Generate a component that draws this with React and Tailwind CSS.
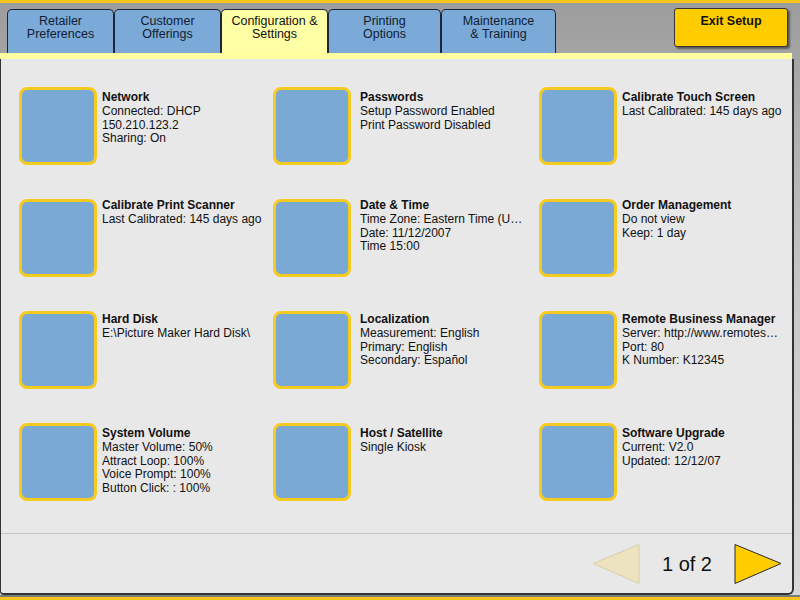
const tabs = [
  { label: ["Retailer", "Preferences"], w: "w-[107px]" },
  { label: ["Customer", "Offerings"], w: "w-[107px]" },
  { label: ["Configuration &", "Settings"], w: "w-[107px]", active: true },
  { label: ["Printing", "Options"], w: "w-[113px]" },
  { label: ["Maintenance", "& Training"], w: "w-[115px]" },
];

const settings = [
  { title: "Network", lines: ["Connected: DHCP", "150.210.123.2", "Sharing: On"] },
  { title: "Passwords", lines: ["Setup Password Enabled", "Print Password Disabled"] },
  { title: "Calibrate Touch Screen", lines: ["Last Calibrated: 145 days ago"] },
  { title: "Calibrate Print Scanner", lines: ["Last Calibrated: 145 days ago"] },
  {
    title: "Date & Time",
    lines: ["Time Zone: Eastern Time (US & Canada)", "Date: 11/12/2007", "Time 15:00"],
  },
  { title: "Order Management", lines: ["Do not view", "Keep: 1 day"] },
  { title: "Hard Disk", lines: ["E:\\Picture Maker Hard Disk\\"] },
  {
    title: "Localization",
    lines: ["Measurement: English", "Primary: English", "Secondary: Español"],
  },
  {
    title: "Remote Business Manager",
    lines: ["Server: http://www.remotesupport.com", "Port: 80", "K Number: K12345"],
  },
  {
    title: "System Volume",
    lines: ["Master Volume: 50%", "Attract Loop: 100%", "Voice Prompt: 100%", "Button Click: : 100%"],
  },
  { title: "Host / Satellite", lines: ["Single Kiosk"] },
  { title: "Software Upgrade", lines: ["Current: V2.0", "Updated: 12/12/07"] },
];

// text offset per row, the rows don't sit at the same spot next to the icon
const rowText = ["pt-[4px]", "pt-0", "pt-[2px]", "pt-[4px]"];

const SettingTile = ({ item, col, row }) => (
  <div className={`flex ${col === 1 ? "gap-[9px]" : "gap-[5px]"}`}>
    {/* Icon placeholder */}
    <div className="w-[78px] h-[78px] shrink-0 rounded-[8px] border-[3px] border-[#f5cb1f] bg-[#7ba9d6]" />
    <div
      className={`${col === 2 ? "w-[160px]" : "w-[164px]"} ${rowText[row]} text-[12px] leading-[13.75px] text-[#111]`}
    >
      <div className="font-bold truncate">{item.title}</div>
      {item.lines.map((line, i) => (
        <div key={i} className="truncate whitespace-pre">
          {line}
        </div>
      ))}
    </div>
  </div>
);

export default function App() {
  return (
    <div
      className="w-[800px] h-[600px] overflow-hidden flex flex-col bg-gradient-to-b from-[#9c9c9c] via-[#c8c8c8] to-[#d8d8d8]"
      style={{ fontFamily: '"Liberation Sans", Arial, sans-serif' }}
    >
      {/* Top yellow bar */}
      <div className="h-[3px] bg-[#f3c41a]" />

      {/* Header: tabs + exit */}
      <div className="h-[50px] flex items-start pl-[7px] pr-[12px]">
        <div className="flex items-end h-full">
          {tabs.map((tab, i) => (
            <div
              key={i}
              className={`${tab.w} h-[44px] rounded-t-[5px] border border-b-0 border-[#1c2638] flex flex-col items-center pt-[5px] text-[12.5px] leading-[13px] ${
                tab.active ? "bg-[#ffffa6] text-[#111]" : "bg-[#7ba9d8] text-[#121c30]"
              }`}
            >
              <span>{tab.label[0]}</span>
              <span>{tab.label[1]}</span>
            </div>
          ))}
        </div>
        <button className="ml-auto mt-[5px] w-[114px] h-[39px] rounded-[3px] border border-[#333] bg-[#ffcc00] shadow-[2px_2px_2px_rgba(0,0,0,0.45)] flex justify-center pt-[3px] text-[12.5px] font-bold text-[#111]">
          Exit Setup
        </button>
      </div>

      {/* Yellow strip under tabs */}
      <div className="w-[792px] h-[6px] bg-[#ffff9f]" />

      {/* Main panel */}
      <div className="flex pr-[6px]">
        <div className="w-[794px] h-[536px] flex flex-col bg-[#e8e8e8] border-l border-r-2 border-b-2 border-[#333] rounded-br-[6px] rounded-bl-[4px]">
          <div className="h-[474px] pt-[28px] pl-[18px]">
            <div className="grid grid-cols-[254px_266px_1fr] gap-y-[34px]">
              {settings.map((item, i) => (
                <SettingTile key={i} item={item} col={i % 3} row={Math.floor(i / 3)} />
              ))}
            </div>
          </div>

          <div className="h-px bg-[#c6c6c6]" />

          {/* Pagination */}
          <div className="flex-1 flex items-center justify-end pr-[10px]">
            <svg width="48" height="40" viewBox="0 0 48 40">
              <polygon points="47,0.5 47,39.5 1,19.5" fill="#ede3bf" stroke="#d8ceaa" strokeWidth="1" />
            </svg>
            <span className="mx-[22px] text-[20px] text-[#111]">1 of 2</span>
            <svg width="48" height="40" viewBox="0 0 48 40">
              <polygon points="1,0.5 1,39.5 47,19.5" fill="#ffcc00" stroke="#2a2a2a" strokeWidth="1" />
            </svg>
          </div>
        </div>
      </div>

      <div className="flex-1 bg-[#7a7a7a]" />
      <div className="h-[3px] bg-[#f3c41a]" />
    </div>
  );
}
